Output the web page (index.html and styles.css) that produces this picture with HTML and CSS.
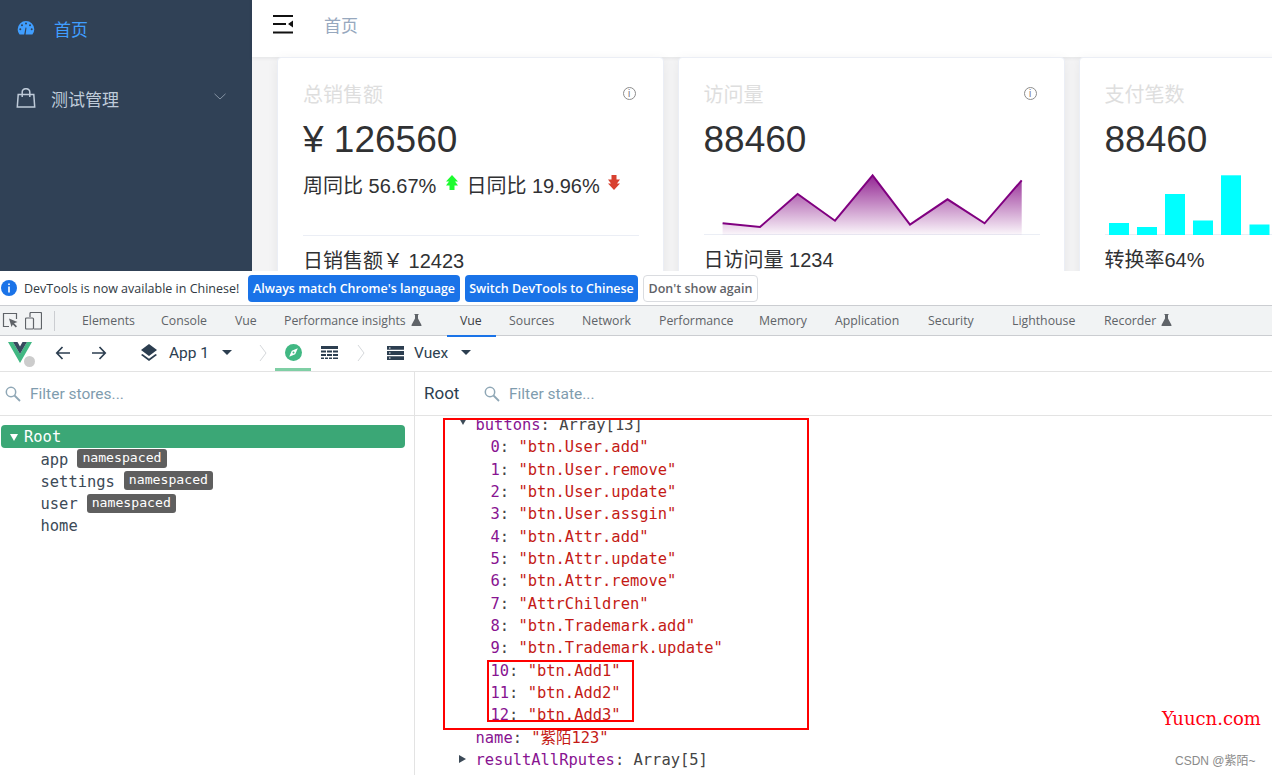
FILE: index.html
```html
<!DOCTYPE html>
<html lang="zh-CN">
<head>
<meta charset="utf-8">
<title>Dashboard</title>
<link rel="stylesheet" href="styles.css">
</head>
<body>
<section class="app">
  <aside class="sidebar">
    <div class="side-item side-active">
      <svg class="side-icon" width="18" height="16" viewBox="0 0 18 16"><path fill="#409eff" d="M9 1a8.300 8.300 0 0 0-8.300 8.300c0 2 .7 3.800 1.900 5.200h4.600L8.500 7.500l1 .2-.9 6.800h6.800a8.300 8.300 0 0 0 1.900-5.200A8.300 8.300 0 0 0 9 1z"/><circle cx="9" cy="3.600" r="1" fill="#304156"/><circle cx="5" cy="5.200" r="1" fill="#304156"/><circle cx="13" cy="5.200" r="1" fill="#304156"/><circle cx="3.300" cy="9.200" r="1" fill="#304156"/><circle cx="14.700" cy="9.200" r="1" fill="#304156"/></svg>
      <span class="side-label">首页</span>
    </div>
    <div class="side-item side-sub">
      <svg class="side-icon" width="20" height="20" viewBox="0 0 20 20"><path fill="none" stroke="#bfcbd9" stroke-width="1.500" d="M2.200 6.600h15.600l.9 12.400H1.300zM6.200 9V4a3.800 3.300 0 0 1 7.600 0v5"/></svg>
      <span class="side-label">测试管理</span>
      <svg class="side-chev" width="12" height="7" viewBox="0 0 12 7"><path fill="none" stroke="#8593a3" stroke-width="1" d="M.5.8 6 6l5.500-5.200"/></svg>
    </div>
  </aside>
  <div class="main">
    <header class="navbar">
      <svg class="hamburger" width="21" height="19" viewBox="0 0 21 19"><path fill="#111" d="M0 0h20v2H0zM0 8h13v2H0zM0 16.500h20v2H0zM20 5.500v7L15 9z"/></svg>
      <span class="crumb">首页</span>
    </header>
    <div class="cards">
      <article class="card">
        <div class="card-head"><span class="card-title">总销售额</span><span class="info">i</span></div>
        <div class="card-num">¥ 126560</div>
        <div class="card-body">
          <div class="compare">
            <span>周同比 56.67%</span>
            <svg class="arrow" width="14" height="15" viewBox="0 0 14 15"><path fill="#1dfc2f" d="M7 0l6 6.500H10l3 4H9.500V15h-5v-4.500H1l3-4H1z"/></svg>
            <span>日同比 19.96%</span>
            <svg class="arrow arrow-down" width="14" height="15" viewBox="0 0 14 15"><path fill="#d8402f" d="M7 15l6-6.500H10l3-4H9.500V0h-5v4.500H1l3 4H1z"/></svg>
          </div>
        </div>
        <div class="card-foot">日销售额￥ 12423</div>
      </article>
      <article class="card">
        <div class="card-head"><span class="card-title">访问量</span><span class="info">i</span></div>
        <div class="card-num">88460</div>
        <div class="card-body">
          <svg class="chart" width="336" height="73" viewBox="0 0 336 73">
            <defs><linearGradient id="fade" x1="0" y1="0" x2="0" y2="1"><stop offset="0" stop-color="#800080" stop-opacity=".85"/><stop offset="1" stop-color="#800080" stop-opacity=".03"/></linearGradient></defs>
            <path fill="url(#fade)" d="M18.600 61.300 56 65 93.600 32 131 58.700 168.600 13.300 206 62.700 243.500 37.300 280.600 61.300 317.700 18.300V73H18.600z"/>
            <path fill="none" stroke="#800080" stroke-width="2" d="M18.600 61.300 56 65 93.600 32 131 58.700 168.600 13.300 206 62.700 243.500 37.300 280.600 61.300 317.700 18.300"/>
          </svg>
        </div>
        <div class="card-foot">日访问量 1234</div>
      </article>
      <article class="card">
        <div class="card-head"><span class="card-title">支付笔数</span></div>
        <div class="card-num">88460</div>
        <div class="card-body">
          <svg class="chart" width="336" height="73" viewBox="0 0 336 73">
            <g fill="#00ffff">
              <rect x="4" y="61" width="20" height="12"/>
              <rect x="32" y="65" width="20" height="8"/>
              <rect x="60" y="32" width="20" height="41"/>
              <rect x="88" y="58.500" width="20" height="14.500"/>
              <rect x="116" y="13.300" width="20" height="59.700"/>
              <rect x="144.500" y="62.500" width="20" height="10.500"/>
            </g>
          </svg>
        </div>
        <div class="card-foot">转换率64%</div>
      </article>
    </div>
  </div>
</section>

<section class="devtools">
  <div class="infobar">
    <svg class="info-dot" width="16" height="16" viewBox="0 0 16 16"><circle cx="8" cy="8" r="8" fill="#1a73e8"/><path fill="#fff" d="M7.200 3.500h1.600v1.600H7.200zM7.200 6.500h1.600v6H7.200z"/></svg>
    <span class="info-text">DevTools is now available in Chinese!</span>
    <button class="btn btn-blue btn-always">Always match Chrome's language</button>
    <button class="btn btn-blue btn-switch">Switch DevTools to Chinese</button>
    <button class="btn btn-plain">Don't show again</button>
  </div>

  <nav class="tabbar">
    <svg class="tool-icon" width="17" height="17" viewBox="0 0 17 17"><path fill="none" stroke="#5f6368" stroke-width="1.200" d="M7 14.500H1.500v-13h13V7"/><path fill="#5f6368" d="M7 6.500l8.500 3.500-3.500 1.300 3 3-1.200 1.200-3-3L9.500 15z"/></svg>
    <svg class="tool-icon tool-device" width="17" height="18" viewBox="0 0 17 18"><path fill="none" stroke="#5f6368" stroke-width="1.200" d="M5 5V1.500a1 1 0 0 1 1-1h9.500a1 1 0 0 1 1 1V16a1 1 0 0 1-1 1H9M1.500 6h6a1 1 0 0 1 1 1v9a1 1 0 0 1-1 1h-6a1 1 0 0 1-1-1V7a1 1 0 0 1 1-1z"/></svg>
    <span class="tab-sep"></span>
    <div class="tabs">
      <span class="tab">Elements</span>
      <span class="tab">Console</span>
      <span class="tab">Vue</span>
      <span class="tab">Performance insights <svg class="flask" width="11" height="12" viewBox="0 0 11 12"><path fill="#5f6368" d="M3.500 0h4v1H7v3.500L10.500 11a.7.7 0 0 1-.6 1H1.100a.7.7 0 0 1-.6-1L4 4.500V1h-.5z"/></svg></span>
      <span class="tab tab-on">Vue</span>
      <span class="tab">Sources</span>
      <span class="tab">Network</span>
      <span class="tab">Performance</span>
      <span class="tab">Memory</span>
      <span class="tab">Application</span>
      <span class="tab">Security</span>
      <span class="tab">Lighthouse</span>
      <span class="tab">Recorder <svg class="flask" width="11" height="12" viewBox="0 0 11 12"><path fill="#5f6368" d="M3.500 0h4v1H7v3.500L10.500 11a.7.7 0 0 1-.6 1H1.100a.7.7 0 0 1-.6-1L4 4.500V1h-.5z"/></svg></span>
    </div>
  </nav>

  <div class="vuebar">
    <span class="vue-logo">
      <svg width="24" height="21" viewBox="0 0 24 21"><path fill="#41b883" d="M0 0h5l7 12L19 0h5L12 21z"/><path fill="#35495e" d="M5 0h4.500L12 4.500 14.500 0H19l-7 12z"/></svg>
      <span class="vue-dot"></span>
    </span>
    <svg class="nav-arrow nav-back" width="16" height="14" viewBox="0 0 16 14"><path fill="none" stroke="#2c3e50" stroke-width="1.700" d="M15 7H2M7.500 1 1.800 7l5.700 6"/></svg>
    <svg class="nav-arrow nav-fwd" width="16" height="14" viewBox="0 0 16 14"><path fill="none" stroke="#2c3e50" stroke-width="1.700" d="M1 7h13M8.500 1l5.700 6-5.700 6"/></svg>
    <svg class="layers" width="16" height="17" viewBox="0 0 16 17"><path fill="#2c3e50" d="M8 0l8 6-8 6-8-6zM1.500 10 8 14.800 14.500 10 16 11l-8 6-8-6z"/></svg>
    <span class="vue-title app-name">App 1</span>
    <span class="caret caret-app"></span>
    <svg class="crumb-chev chev-one" width="8" height="18" viewBox="0 0 8 18"><path fill="none" stroke="#d5d8db" stroke-width="1" d="M1 1l6 8-6 8"/></svg>
    <span class="compass-tab">
      <svg width="17" height="17" viewBox="0 0 17 17"><circle cx="8.500" cy="8.500" r="8.500" fill="#41b883"/><path fill="#fff" d="M12.800 4.200 10.200 10.200 4.200 12.800 6.800 6.800z"/><circle cx="8.500" cy="8.500" r="1" fill="#41b883"/></svg>
    </span>
    <svg class="table-icon" width="17" height="14" viewBox="0 0 17 14"><path fill="#2c3e50" d="M0 0h17v3H0zM0 4.500h5v2H0zM6 4.500h5v2H6zM12 4.500h5v2h-5zM0 8h5v2H0zM6 8h5v2H6zM12 8h5v2h-5zM0 11.500h3v1.500H0zM4 11.500h3v1.500H4zM8 11.500h3v1.500H8zM12 11.500h5v1.500h-5z"/></svg>
    <svg class="crumb-chev chev-two" width="8" height="18" viewBox="0 0 8 18"><path fill="none" stroke="#d5d8db" stroke-width="1" d="M1 1l6 8-6 8"/></svg>
    <svg class="server" width="17" height="14" viewBox="0 0 17 14"><path fill="#2c3e50" d="M0 0h17v3.800H0zM0 5.100h17v3.800H0zM0 10.200h17V14H0z"/><path fill="#fff" d="M2 1.400h1.500v1H2zM2 6.500h1.500v1H2zM2 11.600h1.500v1H2z"/></svg>
    <span class="vue-title vuex-name">Vuex</span>
    <span class="caret caret-vuex"></span>
  </div>

  <div class="split">
    <div class="stores">
      <div class="filter">
        <svg class="search" width="16" height="16" viewBox="0 0 16 16"><circle cx="6" cy="6" r="4.700" fill="none" stroke="#8fa7b6" stroke-width="1.500"/><path stroke="#8fa7b6" stroke-width="1.800" d="M9.500 9.500l5.500 5.500"/></svg>
        <span class="filter-text">Filter stores...</span>
      </div>
      <div class="tree">
        <div class="tree-root"><span class="tri-down tri-white"></span>Root</div>
        <div class="tree-row">app<span class="badge">namespaced</span></div>
        <div class="tree-row">settings<span class="badge">namespaced</span></div>
        <div class="tree-row">user<span class="badge">namespaced</span></div>
        <div class="tree-row">home</div>
      </div>
    </div>
    <div class="state">
      <div class="filter filter-state">
        <span class="state-title">Root</span>
        <svg class="search" width="16" height="16" viewBox="0 0 16 16"><circle cx="6" cy="6" r="4.700" fill="none" stroke="#8fa7b6" stroke-width="1.500"/><path stroke="#8fa7b6" stroke-width="1.800" d="M9.500 9.500l5.500 5.500"/></svg>
        <span class="filter-text">Filter state...</span>
      </div>
      <div class="state-tree">
        <div class="row"><span class="tri-down tri-dark"></span><span class="k">buttons</span>: Array[13]</div>
        <div class="row row-item"><span class="k">0</span>: <span class="s">"btn.User.add"</span></div>
        <div class="row row-item"><span class="k">1</span>: <span class="s">"btn.User.remove"</span></div>
        <div class="row row-item"><span class="k">2</span>: <span class="s">"btn.User.update"</span></div>
        <div class="row row-item"><span class="k">3</span>: <span class="s">"btn.User.assgin"</span></div>
        <div class="row row-item"><span class="k">4</span>: <span class="s">"btn.Attr.add"</span></div>
        <div class="row row-item"><span class="k">5</span>: <span class="s">"btn.Attr.update"</span></div>
        <div class="row row-item"><span class="k">6</span>: <span class="s">"btn.Attr.remove"</span></div>
        <div class="row row-item"><span class="k">7</span>: <span class="s">"AttrChildren"</span></div>
        <div class="row row-item"><span class="k">8</span>: <span class="s">"btn.Trademark.add"</span></div>
        <div class="row row-item"><span class="k">9</span>: <span class="s">"btn.Trademark.update"</span></div>
        <div class="row row-item"><span class="k">10</span>: <span class="s">"btn.Add1"</span></div>
        <div class="row row-item"><span class="k">11</span>: <span class="s">"btn.Add2"</span></div>
        <div class="row row-item"><span class="k">12</span>: <span class="s">"btn.Add3"</span></div>
        <div class="row row-leaf"><span class="k">name</span>: <span class="s">"紫陌123"</span></div>
        <div class="row"><span class="tri-right"></span><span class="k">resultAllRputes</span>: Array[5]</div>
        <div class="row row-leaf"><span class="k">resultAsyncRoutes</span>: Array[0]</div>
      </div>
      <div class="mark-outer"></div>
      <div class="mark-inner"></div>
    </div>
  </div>
</section>

<div class="wm-site">Yuucn.com</div>
<div class="wm-csdn">CSDN @紫陌~</div>
</body>
</html>
```

FILE: styles.css
```css
* { box-sizing: border-box; }
html, body { margin: 0; padding: 0; }
body {
  width: 1272px;
  height: 775px;
  overflow: hidden;
  position: relative;
  background: #fff;
  font-family: "Liberation Sans", "Noto Sans CJK SC", sans-serif;
}

/* top app */
.app { display: flex; height: 271px; overflow: hidden; }
.sidebar { flex: 0 0 252px; background: #304156; }
.side-item { display: flex; align-items: center; font-size: 17px; position: relative; }
.side-active { height: 56px; color: #409eff; padding-left: 17px; }
.side-active .side-label { margin-left: 19px; }
.side-sub { height: 70px; margin-top: 7px; color: #bfcbd9; padding-left: 16px; }
.side-sub .side-label { margin-left: 15px; }
.side-chev { position: absolute; left: 214px; top: 30px; }

.main { flex: 1; min-width: 0; background: #f4f4f5; display: flex; flex-direction: column; }
.navbar {
  height: 57px;
  flex: none;
  background: #fff;
  display: flex;
  align-items: center;
  padding: 0 0 8px 21px;
  box-shadow: 0 1px 4px rgba(0, 21, 41, .08);
}
.crumb { margin-left: 30px; font-size: 17px; color: #97a8be; }
.cards { display: flex; gap: 14px; padding: 0 0 0 25px; width: 1100px; }
.card {
  flex: 0 0 386.500px;
  height: 240px;
  background: #fff;
  border: 1px solid #ebeef5;
  border-radius: 4px;
  box-shadow: 0 2px 12px rgba(0, 0, 0, .06);
  padding: 21px 24px 0 25px;
  color: #303133;
}
.card-head { display: flex; justify-content: space-between; align-items: center; height: 28px; margin-bottom: 10px; }
.card-title { font-size: 20px; color: #dedede; }
.info {
  width: 13px; height: 13px; border: 1px solid #8c8c8c; border-radius: 50%;
  font-size: 10px; line-height: 11px; text-align: center; color: #777;
  margin-right: 3px;
}
.card-num { font-size: 37px; line-height: 46px; height: 46px; }
.card-body { height: 73px; border-bottom: 1px solid #ebeef5; }
.compare { display: flex; align-items: center; padding-top: 9px; font-size: 20px; line-height: 28px; white-space: nowrap; }
.arrow { margin: -7px 7px 0 9px; }
.arrow-down { margin: -7px 0 0 7px; }
.chart { display: block; overflow: visible; margin-top: -1px; }
.card-foot { font-size: 20px; line-height: 28px; margin-top: 11px; white-space: nowrap; }

/* devtools */
.devtools { display: flex; flex-direction: column; height: 504px; background: #fff; color: #202124; }
.infobar { height: 34px; display: flex; align-items: center; padding: 0 0 0 1px; font-family: "Open Sans", "Noto Sans", sans-serif; font-size: 12.500px; flex: none; }
.info-text { margin-left: 7px; width: 224px; white-space: nowrap; color: #303942; }
.btn {
  height: 27px; border-radius: 4px; font: inherit; font-weight: 600; padding: 0; white-space: nowrap;
  border: 1px solid transparent; margin-right: 5px;
}
.btn-blue { background: #1a73e8; color: #fff; }
.btn-always { width: 212px; }
.btn-switch { width: 173px; }
.btn-plain { width: 115px; background: #fff; border-color: #dadce0; color: #5f6368; }

.tabbar {
  height: 31px; flex: none; display: flex; align-items: center; background: #f1f3f4;
  border-top: 1px solid #cbcdd1; border-bottom: 1px solid #cbcdd1;
  font-family: "Open Sans", "Noto Sans", sans-serif; font-size: 12.300px; color: #5f6368;
  padding-left: 2px;
}
.tool-device { margin-left: 6px; }
.tab-sep { width: 1px; height: 20px; background: #cbcdd1; margin: 0 27px 0 12px; }
.tabs {
  display: grid; height: 100%; align-items: stretch;
  grid-template-columns: 79px 74px 49px 176px 49px 73px 77px 100px 76px 93px 84px 92px 90px;
}
.tab { white-space: nowrap; line-height: 29px; }
.tab-on {
  margin-left: -13px; margin-right: 13px; padding-left: 13px;
  border-bottom: 2px solid #1a73e8; color: #3c4043;
}
.flask { vertical-align: -1px; margin-left: 2px; }

.vuebar { height: 36px; flex: none; display: flex; align-items: center; border-bottom: 1px solid #e3e3e3; padding: 0 0 2px 8px; color: #2c3e50; }
.vue-logo { position: relative; width: 24px; height: 21px; flex: none; }
.vue-logo svg { display: block; }
.vue-dot { position: absolute; left: 16px; top: 14px; width: 11px; height: 11px; border-radius: 50%; background: #ccc; }
.nav-back { margin-left: 23px; }
.nav-fwd { margin-left: 20px; }
.layers { margin-left: 34px; }
.vue-title { font-family: "Roboto", sans-serif; font-size: 15.500px; white-space: nowrap; }
.app-name { margin-left: 12px; width: 39px; }
.caret { width: 0; height: 0; border-left: 5px solid transparent; border-right: 5px solid transparent; border-top: 5px solid #2c3e50; flex: none; }
.caret-app { margin-left: 14px; }
.crumb-chev { flex: none; }
.chev-one { margin-left: 27px; }
.compass-tab {
  width: 36px; height: 35px; margin: 0 0 -2px 8px; align-self: flex-end;
  display: flex; align-items: center; justify-content: center; border-bottom: 3px solid #7fcfa5;
}
.table-icon { margin-left: 10px; }
.chev-two { margin-left: 19px; }
.server { margin-left: 22px; }
.vuex-name { margin-left: 10px; width: 35px; }
.caret-vuex { margin-left: 12px; }

.split { flex: 1; min-height: 0; display: flex; overflow: hidden; }
.stores { flex: 0 0 415px; border-right: 1px solid #e3e3e3; }
.state { flex: 1; position: relative; min-width: 0; }
.filter { height: 44px; display: flex; align-items: center; border-bottom: 1px solid #e3e3e3; padding-left: 5px; font-family: "Roboto", sans-serif; font-size: 15.500px; }
.filter-text { color: #7f9cae; margin-left: 9px; }
.filter-state { padding-left: 9px; }
.state-title { font-size: 17px; color: #2c3e50; width: 60px; margin-top: -2px; }

.tree, .state-tree { font-family: "DejaVu Sans Mono", "Noto Sans CJK SC", monospace; font-size: 15.450px; }
.tree { padding: 9px 0 0 1px; color: #2c3e50; }
.tree-root {
  height: 23px; background: #3ba776; color: #fff; border-radius: 4px; width: 404px;
  padding: 1px 0 0 9px; margin-bottom: .5px; display: flex; align-items: center;
}
.tree-row { height: 22.330px; line-height: 22.330px; padding-left: 39.500px; display: flex; align-items: center; color: #3c4a57; }
.badge { font-size: 13.150px; line-height: 18.500px; height: 19px; background: #5f5f5f; color: #fff; border-radius: 3px; padding: 0 5px; margin: -2px 0 0 9px; }
.tri-down { width: 0; height: 0; border-left: 4.500px solid transparent; border-right: 4.500px solid transparent; flex: none; display: inline-block; }
.tri-white { border-top: 7px solid #fff; margin-right: 6px; }
.tri-dark { border-top: 7px solid #3c4a57; position: absolute; left: -16.500px; top: 4px; }
.tri-right { position: absolute; left: -17px; top: 6px; width: 0; height: 0; border-top: 4.500px solid transparent; border-bottom: 4.500px solid transparent; border-left: 7px solid #3c4a57; }

.state-tree { margin-top: -2px; color: #444; padding-left: 60.500px; }
.row { height: 22.330px; line-height: 22.330px; white-space: pre; position: relative; }
.row-item { margin-left: 15px; }
.k { color: #881391; }
.s { color: #c41a16; }

.mark-outer { position: absolute; left: 28px; top: 46px; width: 366px; height: 312px; border: 2px solid #f00; pointer-events: none; }
.mark-inner { position: absolute; left: 72px; top: 288px; width: 147px; height: 62px; border: 2px solid #f00; pointer-events: none; }

.wm-site { position: absolute; left: 1162px; top: 708px; font-family: "DejaVu Serif", serif; font-size: 18px; color: #f01; white-space: nowrap; }
.wm-csdn { position: absolute; left: 1175px; top: 751px; font-size: 12px; color: #8a8a8a; white-space: nowrap; }
```
